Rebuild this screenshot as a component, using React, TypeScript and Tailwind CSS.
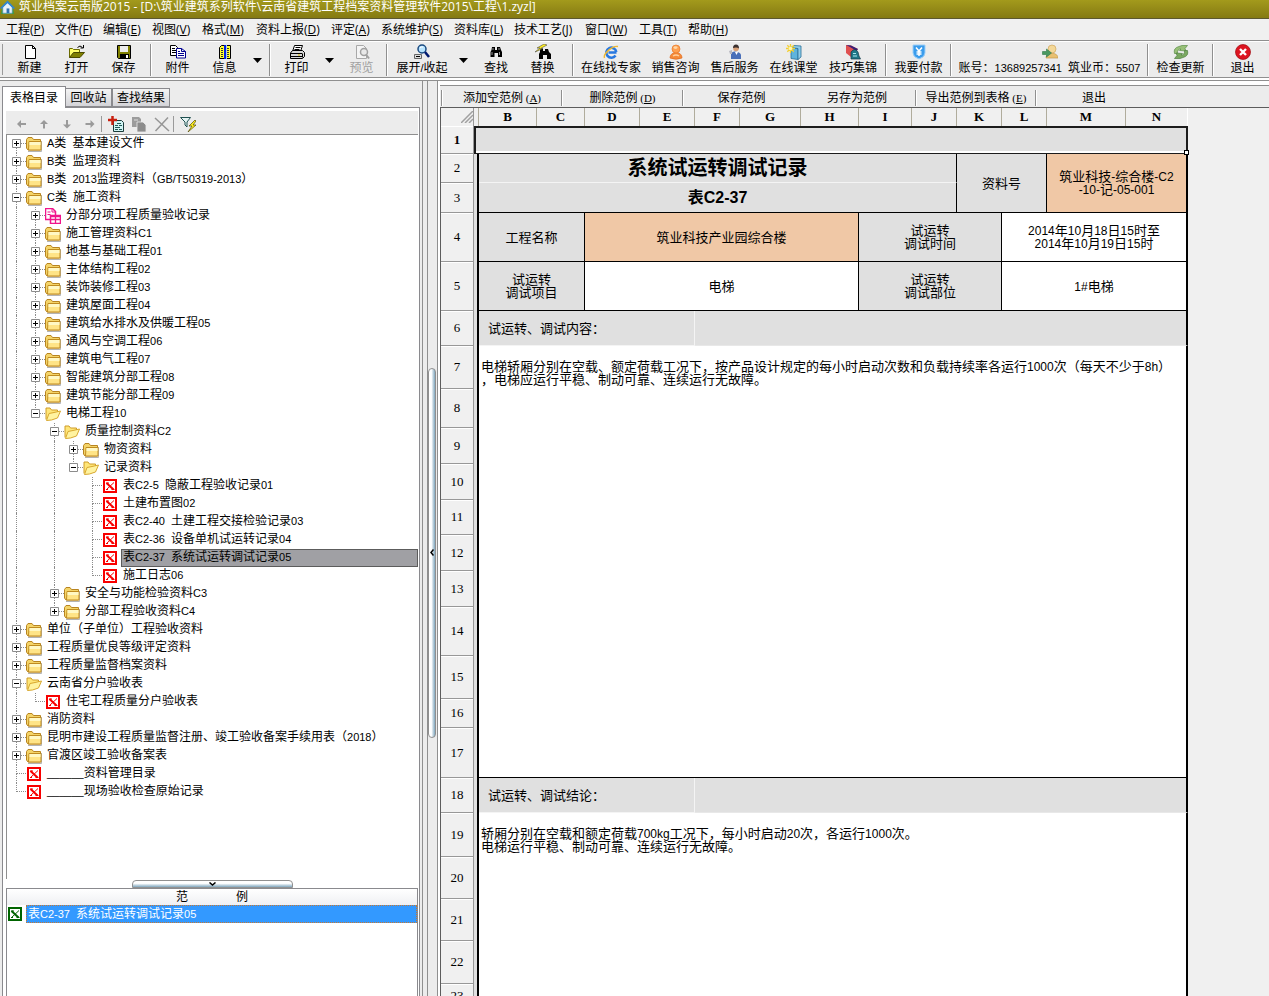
import React, { Fragment, ReactNode } from "react";

const UI_FONT = "font-['Liberation_Sans','Noto_Sans_CJK_SC',sans-serif]";

/* Latin runs are set slightly smaller than the Chinese text so they stay half width. */
function Txt({ children, big }: { children: string; big?: boolean }) {
  const parts = children.split(/([\x21-\x7e]+| +)/).filter(Boolean);
  return (
    <>
      {parts.map((p, i) => {
        if (/^ +$/.test(p))
          return (
            <span key={i} className="font-['Liberation_Mono',monospace] text-[10px] leading-none whitespace-pre">
              {p}
            </span>
          );
        if (/^[\x21-\x7e]/.test(p))
          return (
            <span key={i} className={big ? "text-[12px] leading-none" : "text-[11px] leading-none"}>
              {p}
            </span>
          );
        return <Fragment key={i}>{p}</Fragment>;
      })}
    </>
  );
}

function Svg({ children, size = 16 }: { children: ReactNode; size?: number }) {
  return (
    <svg width={size} height={size} viewBox="0 0 16 16" className="shrink-0" aria-hidden="true">
      {children}
    </svg>
  );
}

const icons: Record<string, ReactNode> = {
  new: (
    <Svg>
      <path d="M3.500 1.500h7l3 3v10h-10z" fill="#fff" stroke="#000" />
      <path d="M10.500 1.500v3h3" fill="none" stroke="#000" />
    </Svg>
  ),
  open: (
    <Svg>
      <path d="M.5 13.500v-9h3l1 1h6v3" fill="#ffff6b" stroke="#6b6b00" />
      <path d="M.5 13.500l4-5h11l-4.500 5z" fill="#808000" stroke="#4a4a00" />
      <path d="M8.500 3.500q2.500-3 5 0M14.500 1v3h-3" fill="none" stroke="#000" />
    </Svg>
  ),
  save: (
    <Svg>
      <path d="M1.500 1.500h13v13h-12l-1-1z" fill="#808000" stroke="#000" />
      <path d="M4 2h8v6H4z" fill="#ececec" />
      <path d="M4 10h9v5H4z" fill="#000" />
      <path d="M10 11h2v3h-2z" fill="#fff" />
    </Svg>
  ),
  attach: (
    <Svg>
      <path d="M.5 1.500h5l2 2v8h-7z" fill="#fff" stroke="#000" />
      <path d="M2 4.500h3M2 6.500h4M2 8.500h4" stroke="#000" />
      <path d="M6.500 4.500h5l4 3v6.500h-9z" fill="#fff" stroke="#000090" />
      <path d="M11.500 4.500v3h4M8 7.500h2M8 9.500h6M8 11.500h6" fill="none" stroke="#000090" />
    </Svg>
  ),
  info: (
    <Svg>
      <path d="M4.500 1.500h9v13h-11v-11z" fill="#ffff30" stroke="#000" />
      <path d="M4 4.500h2M4 6.500h2M4 8.500h2M4 10.500h2M4 12.500h2M10 4.500h2M10 6.500h2M10 8.500h2M10 10.500h2M10 12.500h2" stroke="#333" />
      <path d="M7 1h2v14H7z" fill="#0020e0" />
      <path d="M9.500 1v14" stroke="#9fc4ff" />
    </Svg>
  ),
  print: (
    <Svg>
      <path d="M5.500 1.500h8l-2 6h-8z" fill="#fff" stroke="#000" />
      <path d="M6.500 3.500h5M5.500 5.500h5" stroke="#000" />
      <path d="M1.500 9l2-2.500h10l2 2v4l-2 2h-12z" fill="#d8d8d8" stroke="#000" />
      <path d="M2 9.500h11M2 12.500h11M13.500 9.500v4" stroke="#000" />
      <path d="M9 11h2" stroke="#e0c000" />
    </Svg>
  ),
  preview: (
    <Svg>
      <path d="M2.500 1.500h7l3 3v10h-10z" fill="#f4f4f4" stroke="#a8a8a8" />
      <circle cx="10" cy="8" r="3.500" fill="#e8e8e8" stroke="#a0a0a0" strokeWidth="1.500" />
      <path d="M12 10.500l3 4" stroke="#a0a0a0" strokeWidth="2" />
    </Svg>
  ),
  expand: (
    <Svg>
      <path d="M.5 10.500h7v4h-7z" fill="#ddd" stroke="#666" />
      <path d="M2 12.500h4" stroke="#000" />
      <circle cx="8" cy="5" r="4" fill="#b8e4ff" stroke="#1a4a80" strokeWidth="1.500" />
      <path d="M6 4q1-1.500 3-1" stroke="#fff" fill="none" />
      <path d="M11 8l4 5" stroke="#001a70" strokeWidth="2.500" />
    </Svg>
  ),
  find: (
    <Svg>
      <path d="M4 3h3v3h2V3h3l1 3 1 2v5h-4v-4H6.500v4h-4V8l1-2z" fill="#000" />
      <path d="M5 4v2M11 4v2M4 8v3M11.500 8v3" stroke="#fff" strokeWidth=".6" />
    </Svg>
  ),
  replace: (
    <Svg>
      <path d="M5 5h3v2h2V5h3l1 3 2 2v5h-4v-4H8v4H4v-5l1-2z" fill="#000" />
      <path d="M9 0L2 4h3L0 8l8-3.500H5.500L12 1z" fill="#ffee20" stroke="#333" strokeWidth=".5" />
    </Svg>
  ),
  expert: (
    <Svg>
      <path d="M13.500 8.500H5.500M13.300 8A5 5 0 1 0 12.500 11.500" fill="none" stroke="#2878e0" strokeWidth="2.600" />
      <path d="M1.500 14C0 10 9 1.500 15 2.500" fill="none" stroke="#f0b830" strokeWidth="1.400" />
    </Svg>
  ),
  sales: (
    <Svg>
      <path d="M2 14q0-5 6-5.500 6 .5 6 5.500-6 2.500-12 0z" fill="#f58a38" stroke="#e06a20" strokeWidth=".7" />
      <circle cx="8" cy="5" r="4" fill="#ffa050" stroke="#e87828" strokeWidth=".7" />
      <ellipse cx="7.500" cy="3.600" rx="2" ry="1.300" fill="#ffd8a8" />
      <path d="M5 12q3-2 6 0" stroke="#ffd0a0" strokeWidth="1.500" fill="none" />
    </Svg>
  ),
  service: (
    <Svg>
      <path d="M4 15V10q0-2 4-2.500 5 .5 6 3V15z" fill="#4a6fb8" />
      <path d="M8 8l1.500 3L11 8z" fill="#fff" />
      <circle cx="9" cy="4.500" r="2.800" fill="#d8a078" />
      <path d="M6 4Q6 .5 9 .5T12 4.500Q10 3 6 4z" fill="#3a3030" />
      <path d="M2 7l3-1v4H3z" fill="#b8b8c0" />
    </Svg>
  ),
  course: (
    <Svg>
      <path d="M5 3.500l7 1V15.500l-7-1z" fill="#5fb4dc" stroke="#2a6f98" strokeWidth=".8" />
      <path d="M5 3.500L8 1.500l7 .5v11l-3 2.500v-11z" fill="#8fcdea" stroke="#2a6f98" strokeWidth=".8" />
      <path d="M4.500 0v9M0 4.500h9M1.300 1.300l6.500 6.500M7.800 1.300L1.300 7.800" stroke="#f4d030" strokeWidth="1.300" />
      <circle cx="4.500" cy="4.500" r="1.800" fill="#fff8b0" />
    </Svg>
  ),
  tips: (
    <Svg>
      <path d="M1 1l5 .5L13 5 6 13 1 9z" fill="#e05050" />
      <path d="M1 1l5 .5L13 5l-1.500 2L5 3z" fill="#3a2078" />
      <path d="M6 8q4-5 7 0l1 4 1.500 3H6z" fill="#207888" stroke="#103848" strokeWidth=".7" />
      <path d="M8 9.500h3M8 12h4" stroke="#a8e8f0" />
    </Svg>
  ),
  pay: (
    <Svg>
      <path d="M2 1h12v8q0 4-6 6-6-2-6-6z" fill="#3a9cec" stroke="#9fd0f8" />
      <path d="M5 3.500l3 3.500 3-3.500M8 7v5M5.500 8h5M5.500 10h5" stroke="#fff" strokeWidth="1.500" fill="none" />
    </Svg>
  ),
  account: (
    <Svg>
      <path d="M4 14q0-4 6-5 6 1 6 5z" fill="#e8c070" stroke="#c89a48" strokeWidth=".7" />
      <circle cx="10" cy="5" r="4" fill="#f4d898" stroke="#d0a860" strokeWidth=".7" />
      <path d="M.5 7.500h4V5l5 4-5 4v-2.500h-4z" fill="#4a9860" stroke="#2f7848" strokeWidth=".6" />
    </Svg>
  ),
  update: (
    <Svg>
      <path d="M1.500 9.500Q0 4 6 2.500l3-1h5.500L12 4.500l1 2.500L6.500 6.500 8 5Q4 5 4.500 9.500z" fill="#98c078" stroke="#5a8c48" strokeWidth=".7" />
      <path d="M14.500 6.500q1.500 5.500-4.500 7l-3 1H1.500L4 11.500 3 9l6.500.5L8 11q4 0 3.500-4.500z" fill="#7aa860" stroke="#4f7f40" strokeWidth=".7" />
    </Svg>
  ),
  exit: (
    <Svg>
      <circle cx="8" cy="8" r="7.500" fill="#dc1420" stroke="#a00810" strokeWidth=".7" />
      <path d="M5 5l6 6M11 5l-6 6" stroke="#fff" strokeWidth="2.400" />
    </Svg>
  ),
  left: (
    <Svg>
      <path d="M4 8l4-4v3h5v2H8v3z" fill="#9a9a9a" />
    </Svg>
  ),
  up: (
    <Svg>
      <path d="M8 4l4 4H9v4.500H7V8H4z" fill="#9a9a9a" />
    </Svg>
  ),
  down: (
    <Svg>
      <path d="M8 12.500l4-4H9V4H7v4.500H4z" fill="#9a9a9a" />
    </Svg>
  ),
  right: (
    <Svg>
      <path d="M12.500 8l-4-4v3h-5v2h5v3z" fill="#9a9a9a" />
    </Svg>
  ),
  addDoc: (
    <Svg>
      <path d="M5.500 4.500h8l2 2v9h-10z" fill="#d0f4f4" stroke="#1a3a3a" />
      <path d="M9 7.500h4M7 9.500h3M11 9.500h3M7 11.500h5M7 13.500h3M11 13.500h3" stroke="#205858" />
      <path d="M0 4h9M4.500 0v9" stroke="#c82010" strokeWidth="2.500" />
    </Svg>
  ),
  copyGray: (
    <Svg>
      <path d="M1 1h7l2 2v8H1z" fill="#9c9c9c" />
      <path d="M6 6h6l3 3v7H6z" fill="#8c8c8c" stroke="#ececec" strokeWidth=".8" />
      <path d="M3 4h4" stroke="#dcdcdc" />
    </Svg>
  ),
  cross: (
    <Svg>
      <path d="M1 2l14 13M14 1.500L1.500 15" stroke="#969696" strokeWidth="1.500" />
    </Svg>
  ),
  filter: (
    <Svg>
      <path d="M.5 1.500h10L7 6v5L5 9V6z" fill="#e4f4f4" stroke="#205050" />
      <path d="M15 4l-6 6h3l-4 6 8-7h-3l3-4z" fill="#fff020" stroke="#504800" strokeWidth=".7" />
    </Svg>
  ),
  folder: (
    <Svg>
      <path d="M2 15.500h13.500V5" fill="none" stroke="#b4b4b4" />
      <path d="M.5 3.500L2 1.500h4l1.500 2h7v10.500H2L.5 12z" fill="#f4d468" stroke="#b88420" />
      <path d="M3 5.500h12V14H2.500z" fill="#ffe486" stroke="#c08c20" />
      <path d="M3.500 6h11v3h-11z" fill="#fff8c4" />
    </Svg>
  ),
  folderOpen: (
    <Svg>
      <path d="M1 13.500V2h4l1.500 2h6v3" fill="#ffe678" stroke="#cf9c28" />
      <path d="M1.500 14.500L4 7.500l5-1 6.500-1.500-3 7-6 2z" fill="#fff3a0" stroke="#d8a830" />
    </Svg>
  ),
  sheets: (
    <Svg>
      <path d="M.5 .5h7l3 3v8h-10z" fill="#fff" stroke="#f0148c" strokeWidth="1.500" />
      <path d="M7 1v3h3M2.500 4h3M2.500 6.500h3" fill="none" stroke="#f0148c" />
      <path d="M5.500 7.500h10v8h-10z" fill="#fff" stroke="#f0148c" strokeWidth="1.500" />
      <path d="M5.500 8.500h10M5.500 11.500h10M10.500 8v7" stroke="#f0148c" strokeWidth="1.300" />
    </Svg>
  ),
};

function SheetIcon({ color }: { color: "red" | "green" }) {
  const c = color === "red" ? "#f80000" : "#006400";
  return (
    <Svg>
      <path d="M2 2h12v12H2z" fill="#fff" stroke={c} strokeWidth="2" />
      <path d="M4.500 5l7 6.500" stroke={c} strokeWidth="2" />
      <path d="M12 4.500L4.500 11.500M4 5h3M9.500 11.500h3M4 11.500h2" stroke={c} />
    </Svg>
  );
}

const menus: [string, string, string][] = [
  ["工程", "P", "w-[49px]"],
  ["文件", "F", "w-[48px]"],
  ["编辑", "E", "w-[49px]"],
  ["视图", "V", "w-[50px]"],
  ["格式", "M", "w-[54px]"],
  ["资料上报", "D", "w-[75px]"],
  ["评定", "A", "w-[50px]"],
  ["系统维护", "S", "w-[73px]"],
  ["资料库", "L", "w-[60px]"],
  ["技术工艺", "J", "w-[71px]"],
  ["窗口", "W", "w-[54px]"],
  ["工具", "T", "w-[49px]"],
  ["帮助", "H", "w-[50px]"],
];

function Sep() {
  return <span className="mx-[2px] h-8 w-[2px] shrink-0 border-l border-[#8f8f8f] bg-white" />;
}

function Tool({ icon, label, w = "w-[47px]", disabled }: { icon: string; label: string; w?: string; disabled?: boolean }) {
  return (
    <button
      type="button"
      disabled={disabled}
      className={`flex shrink-0 flex-col items-center whitespace-nowrap ${w} ${disabled ? "text-[#a0a0a0]" : "text-black"}`}
    >
      {icons[icon]}
      <span className="h-4 text-[12px] leading-4">
        <Txt>{label}</Txt>
      </span>
    </button>
  );
}

function Drop({ label }: { label: string }) {
  return (
    <button type="button" aria-label={label} className="flex w-[19px] shrink-0 items-center justify-center">
      <svg width="9" height="5" viewBox="0 0 9 5" aria-hidden="true">
        <path d="M0 0h9L4.500 5z" fill="#000" />
      </svg>
    </button>
  );
}

type Kind = "folder" | "open" | "sheets" | "leaf";
const tree: [number, Kind, string][] = [
  [0, "folder", "A类 基本建设文件"],
  [0, "folder", "B类 监理资料"],
  [0, "folder", "B类 2013监理资料（GB/T50319-2013）"],
  [0, "folder", "C类 施工资料"],
  [1, "sheets", "分部分项工程质量验收记录"],
  [1, "folder", "施工管理资料C1"],
  [1, "folder", "地基与基础工程01"],
  [1, "folder", "主体结构工程02"],
  [1, "folder", "装饰装修工程03"],
  [1, "folder", "建筑屋面工程04"],
  [1, "folder", "建筑给水排水及供暖工程05"],
  [1, "folder", "通风与空调工程06"],
  [1, "folder", "建筑电气工程07"],
  [1, "folder", "智能建筑分部工程08"],
  [1, "folder", "建筑节能分部工程09"],
  [1, "open", "电梯工程10"],
  [2, "open", "质量控制资料C2"],
  [3, "folder", "物资资料"],
  [3, "open", "记录资料"],
  [4, "leaf", "表C2-5 隐蔽工程验收记录01"],
  [4, "leaf", "土建布置图02"],
  [4, "leaf", "表C2-40 土建工程交接检验记录03"],
  [4, "leaf", "表C2-36 设备单机试运转记录04"],
  [4, "leaf", "表C2-37 系统试运转调试记录05"],
  [4, "leaf", "施工日志06"],
  [2, "folder", "安全与功能检验资料C3"],
  [2, "folder", "分部工程验收资料C4"],
  [0, "folder", "单位（子单位）工程验收资料"],
  [0, "folder", "工程质量优良等级评定资料"],
  [0, "folder", "工程质量监督档案资料"],
  [0, "open", "云南省分户验收表"],
  [1, "leaf", "住宅工程质量分户验收表"],
  [0, "folder", "消防资料"],
  [0, "folder", "昆明市建设工程质量监督注册、竣工验收备案手续用表（2018）"],
  [0, "folder", "官渡区竣工验收备案表"],
  [0, "leaf", "______资料管理目录"],
  [0, "leaf", "______现场验收检查原始记录"],
];

const SELECTED = 23;

function continues(index: number, level: number) {
  for (let i = index + 1; i < tree.length; i++) {
    if (tree[i][0] < level) return false;
    if (tree[i][0] === level) return true;
  }
  return false;
}

function TreeRow({ index }: { index: number }) {
  const [level, kind, text] = tree[index];
  const expanded = index + 1 < tree.length && tree[index + 1][0] > level;
  const more = continues(index, level);
  return (
    <li
      role="treeitem"
      aria-level={level + 1}
      aria-selected={index === SELECTED}
      aria-expanded={kind === "leaf" ? undefined : expanded}
      className="flex h-[18px] items-center"
    >
      {Array.from({ length: level }, (_, l) => (
        <span key={l} className="flex h-full w-[19px] shrink-0 pl-[9px]">
          {continues(index, l) && <span className="w-px border-l border-dotted border-[#8c8c8c]" />}
        </span>
      ))}
      <span className="relative grid h-full w-[19px] shrink-0 grid-cols-[9px_10px] grid-rows-[9px_9px]">
        <span />
        <span className={`border-b border-dotted border-[#8c8c8c] ${index > 0 ? "border-l" : ""}`} />
        <span />
        <span className={`border-dotted border-[#8c8c8c] ${more ? "border-l" : ""}`} />
        {kind !== "leaf" && (
          <svg width="9" height="9" viewBox="0 0 9 9" className="absolute top-1 left-[5px]" aria-hidden="true">
            <path d="M.5 .5h8v8h-8z" fill="#fff" stroke="#8c8c8c" />
            <path d={expanded ? "M2 4.500h5" : "M2 4.500h5M4.500 2v5"} stroke="#000" />
          </svg>
        )}
      </span>
      {kind === "leaf" ? (
        <SheetIcon color="red" />
      ) : kind === "sheets" ? (
        icons.sheets
      ) : kind === "open" ? (
        icons.folderOpen
      ) : (
        icons.folder
      )}
      <span
        className={`ml-[3px] h-[18px] flex-1 truncate border px-px text-[12px] leading-[15px] ${
          index === SELECTED ? "border-[#5c5c5c] bg-[#a0a0a4]" : "border-transparent"
        }`}
      >
        <Txt>{text}</Txt>
      </span>
    </li>
  );
}

function LeftPanel() {
  const tab = "border border-[#8a8a8e] text-[12px] leading-4";
  return (
    <section className="flex w-[423px] shrink-0 flex-col border-r border-[#8f8f8f] pt-[5px] pl-[2px]">
      <div role="tablist" className="flex items-end">
        <button type="button" role="tab" aria-selected="true" className={`z-10 -mb-px h-[22px] w-16 border-b-0! bg-white ${tab}`}>
          表格目录
        </button>
        <button type="button" role="tab" className={`h-[19px] w-[46px] border-l-0! bg-gradient-to-b from-[#f4f4f4] to-[#d4d4d8] ${tab}`}>
          回收站
        </button>
        <button type="button" role="tab" className={`h-[19px] w-[58px] bg-gradient-to-b from-[#f4f4f4] to-[#d4d4d8] ${tab}`}>
          查找结果
        </button>
      </div>
      <div className="mr-[2px] flex min-h-0 flex-1 flex-col border-x border-t border-[#8a8a8e] bg-white pt-[3px] pr-px pl-[3px]">
        <div className="flex h-[23px] shrink-0 items-center bg-[#ececec] pt-[3px] pl-[7px]">
          <div className="flex gap-[7px]">
            {[
              ["left", "左移"],
              ["up", "上移"],
              ["down", "下移"],
              ["right", "右移"],
            ].map(([k, n]) => (
              <button key={k} type="button" aria-label={n}>
                {icons[k]}
              </button>
            ))}
          </div>
          <span className="ml-[3px] h-4 w-px bg-[#9a9a9a]" />
          <button type="button" aria-label="新增" className="ml-[6px]">
            {icons.addDoc}
          </button>
          <button type="button" aria-label="复制" className="ml-[7px]">
            {icons.copyGray}
          </button>
          <button type="button" aria-label="删除" className="ml-[7px]">
            {icons.cross}
          </button>
          <span className="ml-[3px] h-4 w-px bg-[#9a9a9a]" />
          <button type="button" aria-label="筛选" className="ml-[6px]">
            {icons.filter}
          </button>
        </div>
        <ul role="tree" className="min-h-0 flex-1 overflow-hidden border-t border-l border-[#8f8f8f]">
          {tree.map((_, i) => (
            <TreeRow key={i} index={i} />
          ))}
        </ul>
        <button
          type="button"
          aria-label="收起范例"
          className="mx-auto mt-px flex h-2 w-[161px] shrink-0 items-center justify-center rounded-t-sm border border-[#909090] bg-gradient-to-b from-white from-40% to-[#7fa6bd]"
        >
          <svg width="7" height="4" viewBox="0 0 7 4" aria-hidden="true">
            <path d="M.5 .5l3 2.500 3-2.500" fill="none" stroke="#000" strokeWidth="1.500" />
          </svg>
        </button>
        <div className="h-[108px] shrink-0 border-x border-t border-[#8a8a8e]">
          <h2 className="flex h-4 justify-center gap-12 bg-gradient-to-b from-white to-[#eff0f3] text-[12px] leading-4">
            <span>范</span>
            <span>例</span>
          </h2>
          <div className="flex h-[18px] items-center">
            <SheetIcon color="green" />
            <button
              type="button"
              className="ml-[3px] h-[18px] flex-1 border border-dotted border-[#c87830] bg-[#3399ff] px-px text-left text-[12px] leading-[15px] text-white"
            >
              <Txt>表C2-37 系统试运转调试记录05</Txt>
            </button>
          </div>
        </div>
      </div>
    </section>
  );
}

const columns: [string, string][] = [
  ["B", "w-[58px]"],
  ["C", "w-[48px]"],
  ["D", "w-[55px]"],
  ["E", "w-[55px]"],
  ["F", "w-[45px]"],
  ["G", "w-[61px]"],
  ["H", "w-[58px]"],
  ["I", "w-[53px]"],
  ["J", "w-[45px]"],
  ["K", "w-[45px]"],
  ["L", "w-[45px]"],
  ["M", "w-[79px]"],
  ["N", "w-[62px]"],
];

const INK = "border-b border-r border-black";
const LAST = "border-b border-b-black border-r-2 border-r-black";
const GRAY = "bg-[#e0e0e0]";
const PEACH = "bg-[#f0c8a6]";

function Row({ n, h, children }: { n: number; h: string; children: ReactNode }) {
  return (
    <tr className={h}>
      <th
        scope="row"
        className={`border-r border-b border-[#989898] bg-[#f0f0f0] font-['Liberation_Serif',serif] text-[13px] leading-4 shadow-[inset_0_1px_#fff] ${
          n === 1 ? "font-bold" : "font-normal"
        }`}
      >
        {n}
      </th>
      {n > 1 && <td className="border-r-2 border-black bg-[#e0e0e0]" />}
      {children}
    </tr>
  );
}

const blankHeights: [number, string][] = [
  [8, "h-[39px]"],
  [9, "h-[36px]"],
  [10, "h-[36px]"],
  [11, "h-[35px]"],
  [12, "h-[36px]"],
  [13, "h-[36px]"],
  [14, "h-[49px]"],
  [15, "h-[43px]"],
  [16, "h-[29px]"],
  [17, "h-[50px]"],
];

function Sheet() {
  return (
    <table className="w-[747px] table-fixed border-separate border-spacing-0 text-center text-[13px] leading-[13px] [&_td]:p-0 [&_th]:p-0">
      <colgroup>
        <col className="w-[33px]" />
        <col className="w-[5px]" />
        {columns.map(([c, w]) => (
          <col key={c} className={w} />
        ))}
      </colgroup>
      <thead>
        <tr className="h-[18px]">
          <td className="border-r border-[#989898] bg-[#f0f0f0]">
            <svg width="12" height="12" viewBox="0 0 12 12" className="ml-auto" aria-hidden="true">
              <path d="M0 12L12 0M4 12l8-8M8 12l4-4" stroke="#a0a0a0" strokeWidth="1.500" />
            </svg>
          </td>
          <td className="border-r border-[#b0ac9c] bg-[#f0f0f0]" />
          {columns.map(([c]) => (
            <th
              key={c}
              scope="col"
              className="border-r border-[#b0ac9c] bg-[#f0f0f0] font-['Liberation_Serif',serif] text-[13px] leading-4 font-bold last:border-white"
            >
              {c}
            </th>
          ))}
        </tr>
      </thead>
      <tbody>
        <Row n={1} h="h-[28px]">
          <td colSpan={14} className="relative border-2 border-b border-[#1c1c1c] bg-[#e0e0e0] shadow-[inset_0_-2px_#fff]">
            <span className="absolute right-[-3px] bottom-[-2px] size-[5px] border border-black bg-white" />
          </td>
        </Row>
        <Row n={2} h="h-[29px]">
          <td colSpan={9} className={`border-r border-b border-r-black border-b-[#f4f4f4] text-[20px] leading-6 font-bold ${GRAY}`}>
            系统试运转调试记录
          </td>
          <td colSpan={2} rowSpan={2} className={`${INK} ${GRAY}`}>
            资料号
          </td>
          <td colSpan={2} rowSpan={2} className={`${LAST} ${PEACH}`}>
            <Txt big>筑业科技-综合楼-C2</Txt>
            <br />
            <Txt big>-10-记-05-001</Txt>
          </td>
        </Row>
        <Row n={3} h="h-[30px]">
          <td colSpan={9} className={`text-[16px] leading-6 font-bold ${INK} ${GRAY}`}>
            表C2-37
          </td>
        </Row>
        <Row n={4} h="h-[49px]">
          <td colSpan={2} className={`${INK} ${GRAY}`}>
            工程名称
          </td>
          <td colSpan={5} className={`${INK} ${PEACH}`}>
            筑业科技产业园综合楼
          </td>
          <td colSpan={3} className={`${INK} ${GRAY}`}>
            试运转
            <br />
            调试时间
          </td>
          <td colSpan={3} className={`bg-white ${LAST}`}>
            <Txt big>2014年10月18日15时至</Txt>
            <br />
            <Txt big>2014年10月19日15时</Txt>
          </td>
        </Row>
        <Row n={5} h="h-[49px]">
          <td colSpan={2} className={`${INK} ${GRAY}`}>
            试运转
            <br />
            调试项目
          </td>
          <td colSpan={5} className={`bg-white ${INK}`}>
            电梯
          </td>
          <td colSpan={3} className={`${INK} ${GRAY}`}>
            试运转
            <br />
            调试部位
          </td>
          <td colSpan={3} className={`bg-white ${LAST}`}>
            <Txt big>1#电梯</Txt>
          </td>
        </Row>
        <Row n={6} h="h-[35px]">
          <td colSpan={4} className={`border-r border-b border-[#f4f4f4] text-left ${GRAY}`}>
            <span className="pl-[9px]">试运转、调试内容：</span>
          </td>
          <td colSpan={9} className={`border-r-2 border-b border-r-black border-b-[#e8e8e8] ${GRAY}`} />
        </Row>
        <Row n={7} h="h-[43px]">
          <td colSpan={13} className="border-r-2 border-black bg-white text-left align-bottom whitespace-nowrap">
            <div className="px-[2px] pb-[3px]">
              <Txt big>电梯轿厢分别在空载、额定荷载工况下，按产品设计规定的每小时启动次数和负载持续率各运行1000次（每天不少于8h）</Txt>
              <br />
              ，电梯应运行平稳、制动可靠、连续运行无故障。
            </div>
          </td>
        </Row>
        {blankHeights.map(([n, h]) => (
          <Row key={n} n={n} h={h}>
            <td colSpan={13} className={`border-r-2 border-black bg-white ${n === 17 ? "border-b" : ""}`} />
          </Row>
        ))}
        <Row n={18} h="h-[35px]">
          <td colSpan={4} className={`border-r border-b border-[#f4f4f4] text-left ${GRAY}`}>
            <span className="pl-[9px]">试运转、调试结论：</span>
          </td>
          <td colSpan={9} className={`border-r-2 border-b border-r-black border-b-[#e8e8e8] ${GRAY}`} />
        </Row>
        <Row n={19} h="h-[44px]">
          <td colSpan={13} className="border-r-2 border-black bg-white text-left align-bottom">
            <div className="px-[2px] pb-1">
              <Txt big>轿厢分别在空载和额定荷载700kg工况下，每小时启动20次，各运行1000次。</Txt>
              <br />
              电梯运行平稳、制动可靠、连续运行无故障。
            </div>
          </td>
        </Row>
        {(
          [
            [20, "h-[42px]"],
            [21, "h-[42px]"],
            [22, "h-[43px]"],
            [23, "h-[24px]"],
          ] as [number, string][]
        ).map(([n, h]) => (
          <Row key={n} n={n} h={h}>
            <td colSpan={13} className="border-r-2 border-black bg-white" />
          </Row>
        ))}
      </tbody>
    </table>
  );
}

function SubLabel({ text, k, w }: { text: string; k?: string; w: string }) {
  return (
    <button type="button" className={`h-full shrink-0 text-[12px] leading-4 ${w}`}>
      {text}
      {k && (
        <span className="font-['Liberation_Serif',serif] text-[11px]">
          {" ("}
          <u>{k}</u>)
        </span>
      )}
    </button>
  );
}

function SubSep() {
  return <span className="h-4 w-[2px] shrink-0 border-l border-[#8f8f8f] bg-white" />;
}

function RightPanel() {
  return (
    <section className="flex min-w-0 flex-1 flex-col border-l border-[#8f8f8f] bg-white pl-[2px]">
      <div className="mt-1 flex h-[22px] shrink-0 items-center border-t border-[#8f8f8f] bg-[#ececec] pt-[3px] pl-px">
        <SubSep />
        <SubLabel text="添加空范例" k="A" w="w-[118px]" />
        <SubSep />
        <SubLabel text="删除范例" k="D" w="w-[119px]" />
        <SubSep />
        <SubLabel text="保存范例" w="w-[115px]" />
        <SubLabel text="另存为范例" w="w-[116px]" />
        <SubSep />
        <SubLabel text="导出范例到表格" k="E" w="w-[118px]" />
        <SubSep />
        <SubLabel text="退出" w="w-[114px]" />
      </div>
      <div className="min-h-0 flex-1 overflow-hidden border-t border-l border-[#5c5c5c] bg-[#f0f0f0]">
        <Sheet />
      </div>
    </section>
  );
}

export default function App() {
  return (
    <div className={`flex h-screen flex-col overflow-hidden bg-[#ececec] text-black ${UI_FONT}`}>
      <header className="flex h-[19px] shrink-0 items-start gap-[4px] border-b border-[#5c5830] bg-gradient-to-b from-[#a39a1c] to-[#857a12] font-['Open_Sans','Noto_Sans_CJK_SC',sans-serif]">
        <Svg size={15}>
          <path d="M2 9h12l1 6H1z" fill="#3f9a48" />
          <path d="M3 7.500l5-5 5 5V14H3z" fill="#e8f2fa" stroke="#5890c0" strokeWidth=".6" />
          <path d="M0 8.500L8 .5l8 8-1.500 1L8 3.500 1.500 9.500z" fill="#2f86d0" />
          <path d="M7 9h3v5H7z" fill="#3070b0" />
        </Svg>
        <h1 className="text-[12px] leading-[14px] whitespace-nowrap text-white">
          筑业档案云南版2015 - [D:\筑业建筑系列软件\云南省建筑工程档案资料管理软件2015\工程\1.zyzl]
        </h1>
      </header>
      <nav className="flex h-[21px] shrink-0 items-center bg-[#f0f0f0] pl-[6px] font-['Open_Sans','Noto_Sans_CJK_SC',sans-serif]">
        {menus.map(([t, k, w]) => (
          <button key={k} type="button" className={`shrink-0 text-left text-[12px] leading-4 whitespace-nowrap ${w}`}>
            {t}(<u>{k}</u>)
          </button>
        ))}
      </nav>
      <div className="flex h-[38px] shrink-0 border-y border-[#8f8f8f] bg-[#ececec] pt-[3px] shadow-[inset_0_1px_#fff]">
        <span className="mr-[3px] ml-[2px] h-[31px] w-px shrink-0 bg-[#9a9a9a]" />
        <Tool icon="new" label="新建" />
        <Tool icon="open" label="打开" />
        <Tool icon="save" label="保存" />
        <span className="w-px shrink-0" />
        <Sep />
        <Tool icon="attach" label="附件" />
        <Tool icon="info" label="信息" />
        <Drop label="信息选项" />
        <Sep />
        <Tool icon="print" label="打印" />
        <Drop label="打印选项" />
        <Tool icon="preview" label="预览" w="w-[45px]" disabled />
        <Sep />
        <Tool icon="expand" label="展开/收起" w="w-[64px]" />
        <Drop label="展开选项" />
        <Tool icon="find" label="查找" w="w-[46px]" />
        <Tool icon="replace" label="替换" />
        <span className="w-1 shrink-0" />
        <Sep />
        <Tool icon="expert" label="在线找专家" w="w-[70px]" />
        <Tool icon="sales" label="销售咨询" w="w-[59px]" />
        <Tool icon="service" label="售后服务" w="w-[59px]" />
        <Tool icon="course" label="在线课堂" w="w-[59px]" />
        <Tool icon="tips" label="技巧集锦" w="w-[60px]" />
        <Sep />
        <Tool icon="pay" label="我要付款" w="w-[59px]" />
        <Sep />
        <Tool icon="account" label="账号：13689257341 筑业币：5507" w="w-[191px]" />
        <Sep />
        <Tool icon="update" label="检查更新" w="w-[59px]" />
        <Sep />
        <Tool icon="exit" label="退出" w="w-[53px]" />
      </div>
      <div className="h-[3px] shrink-0 border-b border-[#8f8f8f] bg-white" />
      <main className="flex min-h-0 flex-1">
        <LeftPanel />
        <div className="flex w-[14px] shrink-0 flex-col items-end bg-[#ececec]">
          <div className="flex h-full w-[10px] flex-col justify-center border-l border-[#8f8f8f] pt-[28px]">
            <button
              type="button"
              aria-label="收起目录"
              className="flex h-[370px] w-2 items-center justify-center rounded-sm border border-[#909090] bg-gradient-to-r from-white from-40% to-[#7fa6bd]"
            >
              <svg width="4" height="7" viewBox="0 0 4 7" className="shrink-0" aria-hidden="true">
                <path d="M3.500 .5L1 3.500l2.500 3" fill="none" stroke="#000" strokeWidth="1.500" />
              </svg>
            </button>
          </div>
        </div>
        <RightPanel />
      </main>
    </div>
  );
}
